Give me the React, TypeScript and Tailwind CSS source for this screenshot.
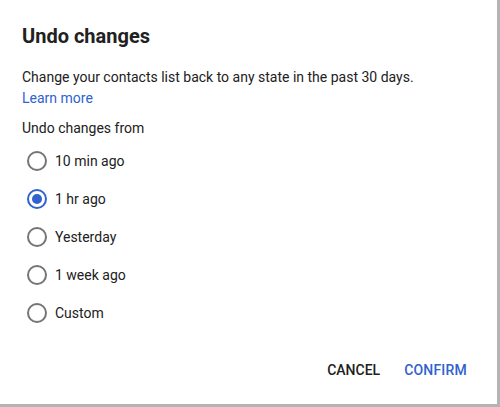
import React, { useState } from "react";

const options = ["10 min ago", "1 hr ago", "Yesterday", "1 week ago", "Custom"];

export default function App() {
  const [sel, setSel] = useState(1);
  return (
    <div className="w-[500px] h-[407px] bg-[#b4b4b4] font-['Roboto',sans-serif] text-[#212121]">
      <div className="w-[497px] h-[404px] bg-white flex flex-col">
        <div className="pl-[22px] pt-[22px]">
          <h1 className="text-[20px] leading-[28px] font-bold">Undo changes</h1>
          <p className="mt-[17px] text-[14px] leading-[21px]">
            Change your contacts list back to any state in the past 30 days.
          </p>
          <a className="block text-[14px] leading-[21px] text-[#3062d0]">Learn more</a>
          <div className="mt-[9px] text-[14px] leading-[20px]">Undo changes from</div>
          <div className="mt-[4px] flex flex-col">
            {options.map((o, i) => (
              <label
                key={o}
                onClick={() => setSel(i)}
                className="h-[38px] flex items-center cursor-pointer"
              >
                <span
                  className={
                    i === sel
                      ? "w-[20px] h-[20px] ml-[5px] rounded-full border-2 border-[#3062d0] flex items-center justify-center"
                      : "w-[20px] h-[20px] ml-[5px] rounded-full border-2 border-[#757575] flex items-center justify-center"
                  }
                >
                  {i === sel && <span className="w-[10px] h-[10px] rounded-full bg-[#3062d0]" />}
                </span>
                <span className="ml-[8px] text-[14px] text-[#212121]">{o}</span>
              </label>
            ))}
          </div>
        </div>
        <div className="mt-[20px] flex justify-end pr-[22px] gap-[8px]">
          <button className="h-[36px] px-[8px] text-[14px] font-medium text-[#212121]">CANCEL</button>
          <button className="h-[36px] px-[8px] text-[14px] font-medium tracking-[0.2px] text-[#3062d0]">CONFIRM</button>
        </div>
      </div>
    </div>
  );
}
